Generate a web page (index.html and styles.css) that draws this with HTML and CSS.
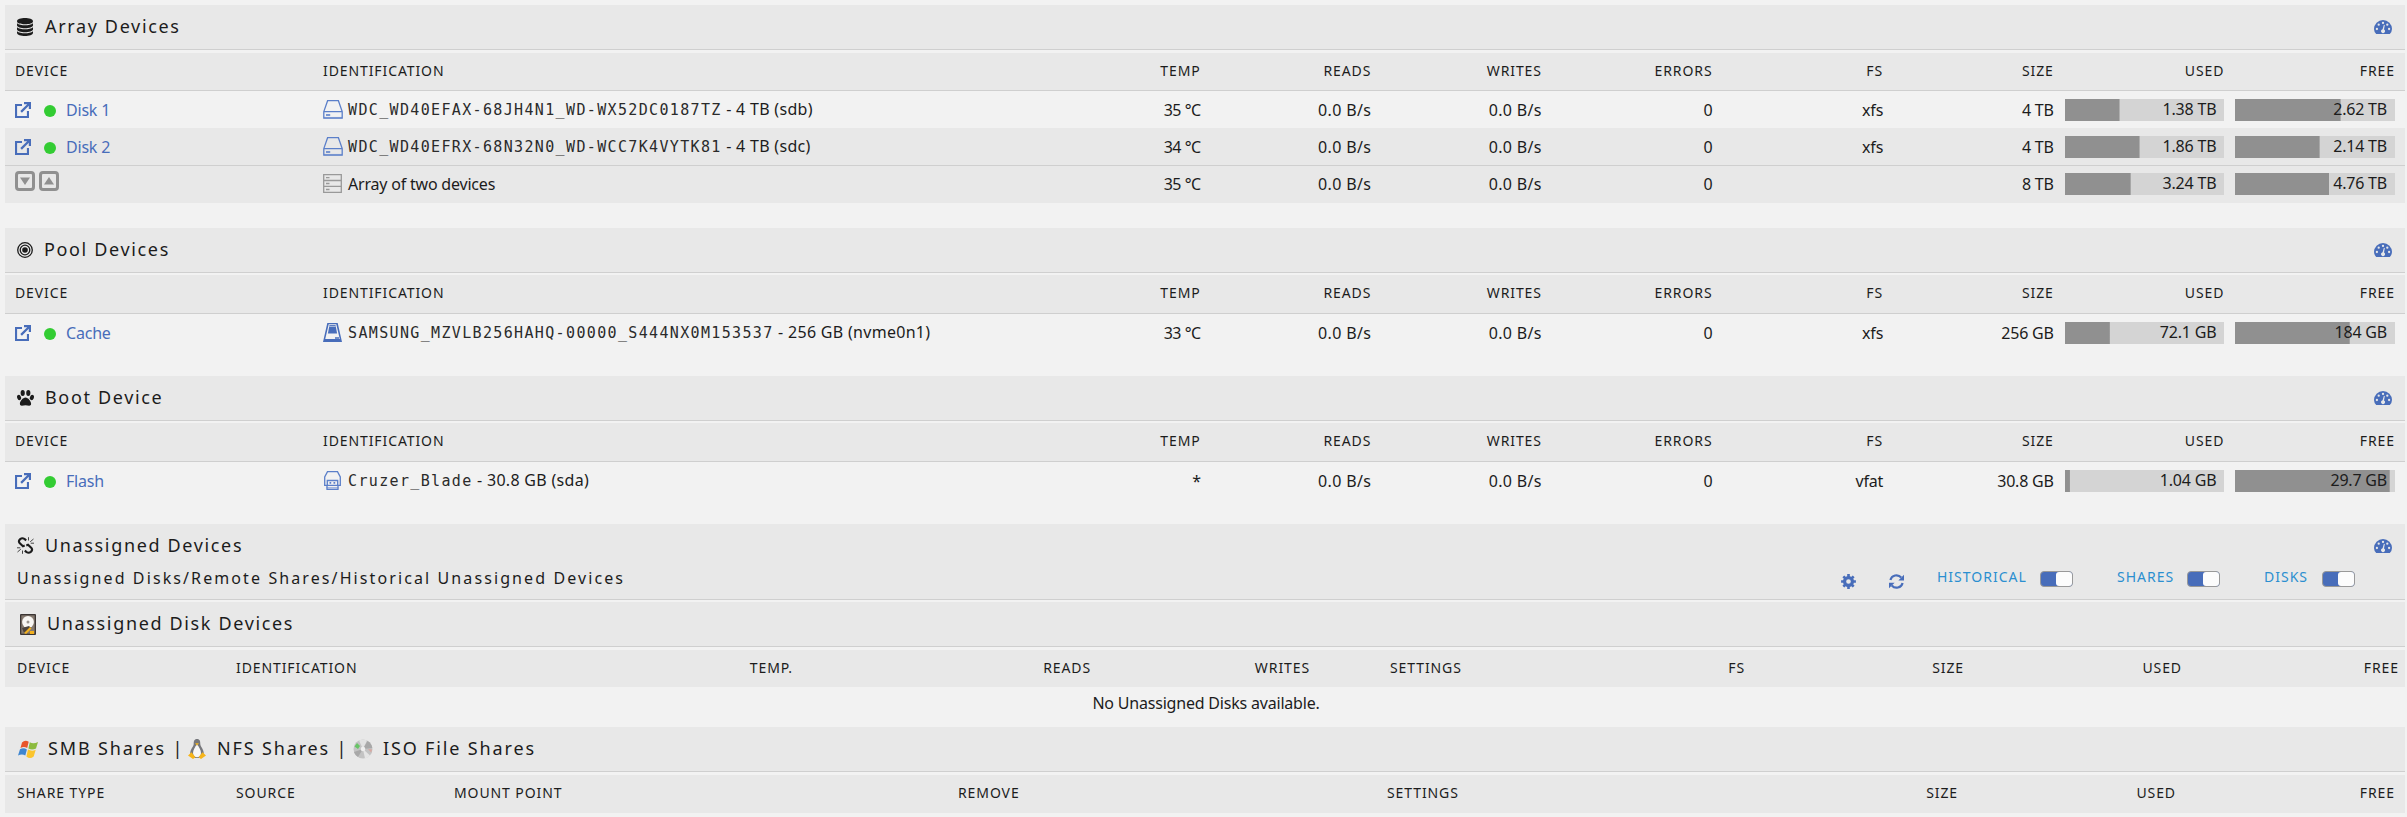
FILE: index.html
```html
<!DOCTYPE html>
<html lang="en">
<head>
<meta charset="utf-8">
<title>Main</title>
<link rel="stylesheet" href="styles.css">
</head>
<body>
<svg class="defs" width="0" height="0">
  <symbol id="i-db" viewBox="0 0 16 18"><path d="M0 3.200C0 1 4 0 8 0s8 1 8 3.200S12 6.200 8 6.200 0 5.400 0 3.200zM0 5.200C1.500 6.700 5 7.200 8 7.200s6.500-.5 8-2v2C16 9.300 12 10.200 8 10.200S0 9.300 0 7.200zM0 9.200c1.500 1.500 5 2 8 2s6.500-.5 8-2v2c0 2.100-4 3-8 3s-8-.9-8-3zM0 13.200c1.500 1.500 5 2 8 2s6.500-.5 8-2v1.600c0 2.200-4 3.200-8 3.200s-8-1-8-3.200z"/></symbol>
  <symbol id="i-pool" viewBox="0 0 16 16"><g fill="none" stroke="currentColor" stroke-width="1.300"><circle cx="8" cy="8" r="7.300"/><circle cx="8" cy="8" r="4.800"/></g><circle cx="8" cy="8" r="2.800"/></symbol>
  <symbol id="i-paw" viewBox="0 0 17 16"><ellipse cx="5.700" cy="3" rx="2.100" ry="3"/><ellipse cx="11.300" cy="3" rx="2.100" ry="3"/><ellipse cx="2.100" cy="7.500" rx="1.900" ry="2.700" transform="rotate(-20 2.100 7.500)"/><ellipse cx="14.900" cy="7.500" rx="1.900" ry="2.700" transform="rotate(20 14.900 7.500)"/><path d="M8.500 7.400c2.600 0 5.600 3.800 5.600 6.300 0 3.200-3.400 1.500-5.600 1.500s-5.600 1.700-5.600-1.500c0-2.500 3-6.300 5.600-6.300z"/></symbol>
  <symbol id="i-chain" viewBox="0 0 17 17"><g fill="none" stroke="currentColor"><path stroke-width="2.100" d="M9.200 3.400 7.400 1.900Q5.200.6 3.200 2.100 1 4 2.600 6.100L6 9.200l1.700-.6M7.800 13.600l1.800 1.500q2.200 1.300 4.200-.2 2.200-1.900.6-4L11 7.800l-1.700.6"/><path stroke-width=".8" d="M11.500.2v3.300M16.500 2l-3.300 2.800M17 6.200h-3.300M5.500 13.500v3.300M.5 15l3.300-2.800M0 10.800h3.300"/></g></symbol>
  <symbol id="i-tach" viewBox="0 0 18 14"><path d="M2.200 14Q0 11.600 0 9a9 9 0 0 1 18 0q0 2.600-2.200 5z"/><g fill="#e8e8e8"><circle cx="2.900" cy="9" r="1.150"/><circle cx="4.700" cy="4.700" r="1.150"/><circle cx="9" cy="2.900" r="1.150"/><circle cx="13.300" cy="4.700" r="1.150"/><circle cx="15.100" cy="9" r="1.150"/><path d="m9.900 4.800.9.200-.8 4.400a2 2 0 1 1-1.400-.2z"/></g></symbol>
  <symbol id="i-ext" viewBox="0 0 16 16"><path d="M0 2h7v2.100H2.100v9.800h9.800V9H14v7H0zM9 0h7v7h-2.200V3.800l-6.900 6.900-1.600-1.600 6.900-6.900H9z"/></symbol>
  <symbol id="i-drive" viewBox="0 0 20 19"><g fill="none" stroke="currentColor" stroke-width="1.300"><path d="M.8 11.600 4.600.7h10.800l3.800 10.900v6.600H.8zM.8 11.600h18.400"/><path d="M3 15h4.200" stroke-width="1.600"/><path d="M1 17.600h18" opacity=".6"/></g></symbol>
  <symbol id="i-nvme" viewBox="0 0 19 19"><path d="M4.300 0h10.400L19 19H0zM5.700 1.300 2 17h15L13.300 1.300z" fill-rule="evenodd"/><path d="M6.500 2h6l1.600 8.600H4.900z"/><path d="M6.300 3.300h6.400" stroke="#f2f2f2" stroke-width=".7"/><path d="M2 16.700h15M12 15h4" stroke="currentColor" stroke-width="1.500"/></symbol>
  <symbol id="i-usb" viewBox="0 0 17 19"><g fill="none" stroke="currentColor" stroke-width="1.300"><path d="M3.500.7h10L16.300 6v8.300H.7V6z"/><path d="M3.300 14V9.500h10.400V14M3 14.500v3.800h11v-3.800"/><path d="M2.500 16.800h12" opacity=".6"/><path d="M5.500 11.800h1.700M9.500 11.800h1.700" stroke-width="1.700"/></g></symbol>
  <symbol id="i-list" viewBox="0 0 19 19"><g fill="none" stroke="currentColor" stroke-width="1.300"><path d="M.7.700h17.600v17.600H.7zM.7 6.500h17.600M.7 12.400h17.600M3 3.700h3.500M3 9.500h3.500M3 15.500h3.500"/></g></symbol>
  <symbol id="i-down" viewBox="0 0 20 20"><rect x="1.500" y="1.500" width="17" height="17" rx="2.500" fill="none" stroke="currentColor" stroke-width="3"/><path d="M5 6.500h10L10 14z"/></symbol>
  <symbol id="i-up" viewBox="0 0 20 20"><rect x="1.500" y="1.500" width="17" height="17" rx="2.500" fill="none" stroke="currentColor" stroke-width="3"/><path d="M5 13.500h10L10 6z"/></symbol>
  <symbol id="i-gear" viewBox="0 0 16 16"><circle cx="8" cy="8" r="4.200" fill="none" stroke="currentColor" stroke-width="3.400"/><path d="M8 .1v3M8 12.900v3M.1 8h3M12.900 8h3M2.500 2.500l2 2M11.500 11.500l2 2M2.500 13.500l2-2M11.500 4.500l2-2" stroke="currentColor" stroke-width="2.800"/></symbol>
  <symbol id="i-sync" viewBox="0 0 16 16"><g fill="none" stroke="currentColor" stroke-width="2.300"><path d="M1.500 6.500A6.600 6.600 0 0 1 13 3.800M14.500 9.500A6.600 6.600 0 0 1 3 12.200"/></g><path d="M16 .8v6h-6zM0 15.200v-6h6z"/></symbol>
  <symbol id="i-hdd" viewBox="0 0 16 21"><rect width="16" height="21" rx="1" fill="#3b3533"/><rect x="1.300" y="1.300" width="13.400" height="18.400" fill="#85796f"/><circle cx="8" cy="8" r="5.900" fill="#f8f6f3"/><circle cx="8" cy="8" r="1.500" fill="#9a9590"/><path d="m2 14 2 5 7-5-2-2z" fill="#4c443e"/><path d="m4 19 6-6 1.500 1.500L6 20zM10 17h4v3h-4z" fill="#f2b01e"/></symbol>
  <symbol id="i-win" viewBox="0 0 20 18"><path d="M4 2.500Q7-.5 10.700 1.800L9.200 8Q5.800 6 2.500 8z" fill="#e8552b"/><path d="M11.800 2.300q3.700 2 8.200-.4L18 8.400q-4 2-7.600 0z" fill="#8cbb3e"/><path d="M2 9.200q3.400-2 6.900.2l-1.600 6.200Q4 13.500 0 15.600z" fill="#3f86d0"/><path d="M10 9.600q3.800 2 7.700.2l-2 6.600q-3.700 3-7.300 0z" fill="#fbc52d"/></symbol>
  <symbol id="i-tux" viewBox="0 0 18 20"><path d="M9 0c3 0 3.300 2.500 3.300 5 0 2.500 3.500 5 3.500 9.500C15.800 18 12 19 9 19s-6.800-1-6.800-4.500C2.200 10 5.700 7.500 5.700 5c0-2.500.3-5 3.300-5z" fill="#77787c"/><path d="M9 5.500c1.800 2 4 5.500 4 8.500 0 3-2 4.200-4 4.200S5 17 5 14c0-3 2.200-6.500 4-8.500z" fill="#f7f7f7"/><path d="M7 4.200h4L9 6.500zM0 16.500l3.500-3.200 4 5L5 20zM18 16.500l-3.500-3.200-4 5L13 20z" fill="#f6b51b"/></symbol>
  <symbol id="i-cd" viewBox="0 0 20 20"><circle cx="10" cy="10" r="9.500" fill="#c3c3c3"/><path d="M10 10 6 1.400A9.500 9.500 0 0 1 14 1.400z" fill="#e2e2e2"/><path d="m10 10 4.500-8A9.500 9.500 0 0 1 19.300 9z" fill="#a8a8a8"/><path d="M10 10 5 18.100A9.500 9.500 0 0 1 1 13z" fill="#a8a8a8"/><path d="m10 10 2 9.400a9.500 9.500 0 0 0 5-3z" fill="#e5e5e5"/><path d="M1.500 7.500 4 4l3 3-2 3z" fill="#68c566"/><path d="m15 10 4 .5-.8 3z" fill="#d9a7a0"/><circle cx="10" cy="10" r="2.300" fill="#eee"/></symbol>
</svg>
<main class="page">

<section class="panel">
  <div class="title"><svg class="ic-db"><use href="#i-db"/></svg><span>Array Devices</span><svg class="tach"><use href="#i-tach"/></svg></div>
  <div class="row head"><span>DEVICE</span><span>IDENTIFICATION</span><span>TEMP</span><span>READS</span><span>WRITES</span><span>ERRORS</span><span>FS</span><span>SIZE</span><span>USED</span><span>FREE</span></div>
  <div class="row data"><span class="dev"><svg class="ext"><use href="#i-ext"/></svg><i class="dot"></i><a>Disk 1</a></span><span class="id"><svg class="drive"><use href="#i-drive"/></svg><span class="serial"><code>WDC_WD40EFAX-68JH4N1_WD-WX52DC0187TZ</code> - 4 TB (sdb)</span></span><span>35 °C</span><span>0.0 B/s</span><span>0.0 B/s</span><span>0</span><span>xfs</span><span>4 TB</span><span class="bar" style="--v:34.3%">1.38 TB</span><span class="bar" style="--v:66%">2.62 TB</span></div>
  <div class="row data even"><span class="dev"><svg class="ext"><use href="#i-ext"/></svg><i class="dot"></i><a>Disk 2</a></span><span class="id"><svg class="drive"><use href="#i-drive"/></svg><span class="serial"><code>WDC_WD40EFRX-68N32N0_WD-WCC7K4VYTK81</code> - 4 TB (sdc)</span></span><span>34 °C</span><span>0.0 B/s</span><span>0.0 B/s</span><span>0</span><span>xfs</span><span>4 TB</span><span class="bar" style="--v:46.9%">1.86 TB</span><span class="bar" style="--v:52.9%">2.14 TB</span></div>
  <div class="row data even total"><span class="dev spin"><svg><use href="#i-down"/></svg><svg><use href="#i-up"/></svg></span><span class="id"><svg class="list"><use href="#i-list"/></svg><span>Array of two devices</span></span><span>35 °C</span><span>0.0 B/s</span><span>0.0 B/s</span><span>0</span><span></span><span>8 TB</span><span class="bar" style="--v:41.3%">3.24 TB</span><span class="bar" style="--v:59%">4.76 TB</span></div>
</section>

<section class="panel short">
  <div class="title"><svg class="ic-pool"><use href="#i-pool"/></svg><span>Pool Devices</span><svg class="tach"><use href="#i-tach"/></svg></div>
  <div class="row head tall"><span>DEVICE</span><span>IDENTIFICATION</span><span>TEMP</span><span>READS</span><span>WRITES</span><span>ERRORS</span><span>FS</span><span>SIZE</span><span>USED</span><span>FREE</span></div>
  <div class="row data"><span class="dev"><svg class="ext"><use href="#i-ext"/></svg><i class="dot"></i><a>Cache</a></span><span class="id"><svg class="nvme"><use href="#i-nvme"/></svg><span class="serial"><code>SAMSUNG_MZVLB256HAHQ-00000_S444NX0M153537</code> - 256 GB (nvme0n1)</span></span><span>33 °C</span><span>0.0 B/s</span><span>0.0 B/s</span><span>0</span><span>xfs</span><span>256 GB</span><span class="bar" style="--v:28.2%">72.1 GB</span><span class="bar" style="--v:71.7%">184 GB</span></div>
</section>

<section class="panel short">
  <div class="title"><svg class="ic-paw"><use href="#i-paw"/></svg><span>Boot Device</span><svg class="tach"><use href="#i-tach"/></svg></div>
  <div class="row head tall"><span>DEVICE</span><span>IDENTIFICATION</span><span>TEMP</span><span>READS</span><span>WRITES</span><span>ERRORS</span><span>FS</span><span>SIZE</span><span>USED</span><span>FREE</span></div>
  <div class="row data"><span class="dev"><svg class="ext"><use href="#i-ext"/></svg><i class="dot"></i><a>Flash</a></span><span class="id"><svg class="usb"><use href="#i-usb"/></svg><span class="serial"><code>Cruzer_Blade</code> - 30.8 GB (sda)</span></span><span>*</span><span>0.0 B/s</span><span>0.0 B/s</span><span>0</span><span>vfat</span><span>30.8 GB</span><span class="bar" style="--v:3.1%">1.04 GB</span><span class="bar" style="--v:96.7%">29.7 GB</span></div>
</section>

<section class="panel">
  <div class="unassigned">
    <div class="title plain"><svg class="ic-chain"><use href="#i-chain"/></svg><span>Unassigned Devices</span><svg class="tach"><use href="#i-tach"/></svg></div>
    <div class="tools"><span class="sub">Unassigned Disks/Remote Shares/Historical Unassigned Devices</span>
      <svg class="gear"><use href="#i-gear"/></svg><svg class="sync"><use href="#i-sync"/></svg>
      <span class="opt historical">HISTORICAL</span><i class="toggle"></i><span class="opt shares">SHARES</span><i class="toggle"></i><span class="opt disks">DISKS</span><i class="toggle"></i></div>
  </div>
  <div class="title"><svg class="ic-hdd"><use href="#i-hdd"/></svg><span>Unassigned Disk Devices</span></div>
  <div class="row head disks-head"><span>DEVICE</span><span>IDENTIFICATION</span><span>TEMP.</span><span>READS</span><span>WRITES</span><span class="set">SETTINGS</span><span>FS</span><span>SIZE</span><span>USED</span><span>FREE</span></div>
  <div class="empty">No Unassigned Disks available.</div>
  <div class="title shares-title"><svg class="ic-win"><use href="#i-win"/></svg><span class="smb">SMB Shares |</span><svg class="ic-tux"><use href="#i-tux"/></svg><span class="nfs">NFS Shares |</span><svg class="ic-cd"><use href="#i-cd"/></svg><span>ISO File Shares</span></div>
  <div class="row head shares-head"><span>SHARE TYPE</span><span>SOURCE</span><span>MOUNT POINT</span><span>REMOVE</span><span>SETTINGS</span><span class="r">SIZE</span><span class="r">USED</span><span class="r">FREE</span></div>
</section>
</main>
</body>
</html>
```
FILE: styles.css
```css
* { box-sizing: border-box; }
body {
  margin: 0;
  background: #f2f2f2;
  color: #1c1c1c;
  font: 16px/22px "Noto Sans", sans-serif;
  letter-spacing: -0.2px;
  white-space: nowrap;
}
svg { display: block; flex: none; fill: currentColor; }
.defs { position: absolute; }
.page { padding: 5px 2px 0 5px; }
.panel { margin-bottom: 25px; }
.short { height: 123px; }

.title {
  display: flex;
  align-items: center;
  height: 45px;
  margin-bottom: 3px;
  padding: 0 13px 0 12px;
  background: #e8e8e8;
  border-bottom: 1px solid #cfcfcf;
  font-size: 18px;
  letter-spacing: 1.65px;
}
.title > span { padding-bottom: 2px; }
.short .title { margin-bottom: 2px; }
.tach { width: 18px; height: 14px; margin-left: auto; color: #486dba; }
.ic-db { width: 16px; height: 18px; margin-right: 12px; }
.ic-pool { width: 16px; height: 16px; margin-right: 11px; }
.ic-paw { width: 17px; height: 16px; margin-right: 11px; }
.ic-chain { width: 17px; height: 17px; margin-right: 11px; }
.ic-hdd { width: 16px; height: 21px; margin: 0 11px 0 3px; }

.row {
  display: grid;
  grid-template-columns: 308px 707px repeat(8, 1fr);
  align-items: center;
  height: 37px;
  padding: 0 10px;
}
.row > span { text-align: right; }
.row > span:nth-child(-n+2) { text-align: left; }
.even { background: #e8e8e8; }
.total { height: 38px; padding-bottom: 2px; border-top: 1px solid #cfcfcf; }
.data > span:nth-child(3) { letter-spacing: -0.5px; }
.data > span:nth-child(4), .data > span:nth-child(5) { letter-spacing: 0.35px; }
.head {
  height: 38px;
  padding-bottom: 2px;
  background: #e8e8e8;
  border-bottom: 1px solid #cfcfcf;
  font-size: 14px;
  letter-spacing: 0.9px;
}
.tall { height: 39px; }

.dev { display: flex; align-items: center; color: #486dba; }
.ext { width: 16px; height: 16px; }
.dot { width: 12px; height: 12px; margin: 2px 10px 0 13px; border-radius: 50%; background: #33cc33; }
.spin { gap: 4px; padding-bottom: 5px; color: #909090; }
.spin svg { width: 20px; height: 20px; }
.id { display: flex; align-items: center; }
.drive { width: 20px; height: 19px; margin-right: 5px; color: #5b7fc9; }
.nvme { width: 19px; height: 19px; margin-right: 6px; color: #486dba; }
.usb { width: 17px; height: 19px; margin: 0 7px 0 1px; color: #5b7fc9; }
.list { width: 19px; height: 19px; margin-right: 6px; color: #999; }
.serial { padding-bottom: 2px; letter-spacing: 0.3px; }
code { color: #2b2b2b; font: 15px/20px "DejaVu Sans Mono", monospace; letter-spacing: 1.350px; }
.bar {
  height: 22px;
  margin-left: 11px;
  padding-right: 8px;
  line-height: 21px;
  background: linear-gradient(#909090, #909090) 0 0 / var(--v) 100% no-repeat #d4d4d4;
}

.unassigned { height: 76px; margin-bottom: 2px; background: #e8e8e8; border-bottom: 1px solid #cfcfcf; }
.plain { height: 43px; margin: 0; border: 0; }
.tools { display: flex; align-items: center; height: 22px; padding-left: 12px; }
.sub { width: 1824px; letter-spacing: 2.1px; }
.gear, .sync { width: 15px; height: 15px; margin-top: 6px; color: #486dba; }
.sync { margin-left: 33px; }
.opt { padding-bottom: 2px; color: #2b8fd0; font-size: 14px; letter-spacing: 1px; }
.historical { width: 103px; margin-left: 33px; }
.shares { width: 70px; margin-left: 44px; }
.disks { width: 58px; margin-left: 44px; }
.toggle {
  display: flex;
  justify-content: flex-end;
  width: 33px;
  height: 16px;
  margin-top: 1px;
  border: 1px solid #999;
  border-radius: 4px;
  background: #486dba;
}
.toggle::after { content: ""; width: 16px; height: 14px; border-radius: 3px; background: #fcfcfc; }
.disks-head, .shares-head { padding: 0 6px 2px 12px; border: 0; height: 37px; }
.disks-head { grid-template-columns: 219px 400px 157px 298px 219px 278px 157px 219px 218px 1fr; margin-top: 3px; }
.row > .set { text-align: left; padding-left: 80px; }
.shares-head { grid-template-columns: 219px 218px 504px 429px 400px 171px 218px 1fr; padding-right: 10px; height: 38px; }
.row.shares-head > span { text-align: left; }
.row.shares-head > .r { text-align: right; }
.empty { height: 40px; padding: 5px 0 0 2px; text-align: center; }
.shares-title { padding-left: 13px; letter-spacing: 1.850px; }
.ic-win { width: 20px; height: 18px; margin-right: 10px; }
.ic-tux { width: 18px; height: 20px; margin-right: 11px; }
.ic-cd { width: 20px; height: 20px; margin-right: 10px; }
.smb { width: 140px; }
.nfs { width: 136px; }
```
